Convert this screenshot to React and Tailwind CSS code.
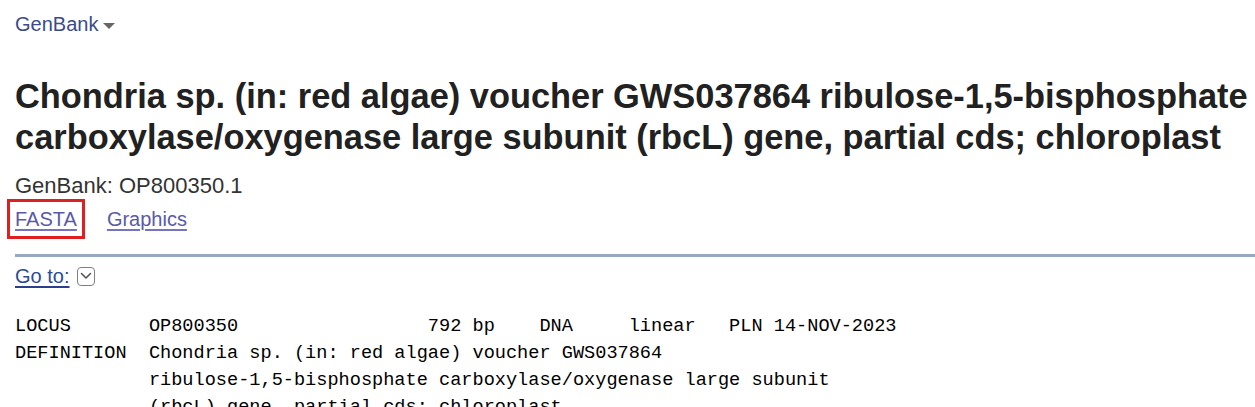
import React from "react";

const lines = [
  "LOCUS       OP800350                 792 bp    DNA     linear   PLN 14-NOV-2023",
  "DEFINITION  Chondria sp. (in: red algae) voucher GWS037864",
  "            ribulose-1,5-bisphosphate carboxylase/oxygenase large subunit",
  "            (rbcL) gene, partial cds; chloroplast.",
];

export default function App() {
  return (
    <div className="min-h-screen bg-white pl-[15px] font-['Liberation_Sans',Arial,sans-serif] text-[#222]">
      {/* database selector */}
      <div className="pt-[11px] flex items-center text-[20px] leading-[26px] text-[#3b4a8c]">
        <span>GenBank</span>
        <span className="ml-[5px] mt-[3px] w-0 h-0 border-l-[6px] border-r-[6px] border-t-[6px] border-l-transparent border-r-transparent border-t-[#666]" />
      </div>

      <h1 className="mt-[39px] text-[34.4px] leading-[41px] font-bold text-[#212121]">
        Chondria sp. (in: red algae) voucher GWS037864 ribulose-1,5-bisphosphate carboxylase/oxygenase large subunit (rbcL) gene, partial cds; chloroplast
      </h1>

      <div className="mt-[15px] text-[22px] leading-[26px] text-[#333]">GenBank: OP800350.1</div>

      <div className="flex items-center text-[20px] leading-[26px]">
        <span className="-ml-[8px] border-[3px] border-[#e02020] px-[5px] py-[4px]">
          <a href="#" className="text-[#5a5aa8] underline decoration-[#7474c0] underline-offset-[3px]">FASTA</a>
        </span>
        <a href="#" className="ml-[22px] text-[#5a5aa8] underline decoration-[#7474c0] underline-offset-[3px]">Graphics</a>
      </div>

      <div className="mt-[15px] h-[3px] bg-[#97a8c0]" />

      <div className="mt-[6px] flex items-center text-[20px] leading-[26px]">
        <a href="#" className="text-[#2b4b9b] underline decoration-[#2b3f8c] underline-offset-[3px]">Go to:</a>
        <span className="ml-[8px] w-[18px] h-[19px] border-[1.5px] border-[#808080] rounded-[4px] flex items-center justify-center">
          <svg width="12" height="8" viewBox="0 0 12 8" fill="none" stroke="#555" strokeWidth="1.6" strokeLinecap="round" strokeLinejoin="round">
            <path d="M1.5 1.5l4.5 4.5 4.5-4.5" />
          </svg>
        </span>
      </div>

      <pre className="mt-[24px] font-['Liberation_Mono','DejaVu_Sans_Mono',monospace] text-[18.6px] leading-[27px] text-black">
        {lines.join("\n")}
      </pre>
    </div>
  );
}
